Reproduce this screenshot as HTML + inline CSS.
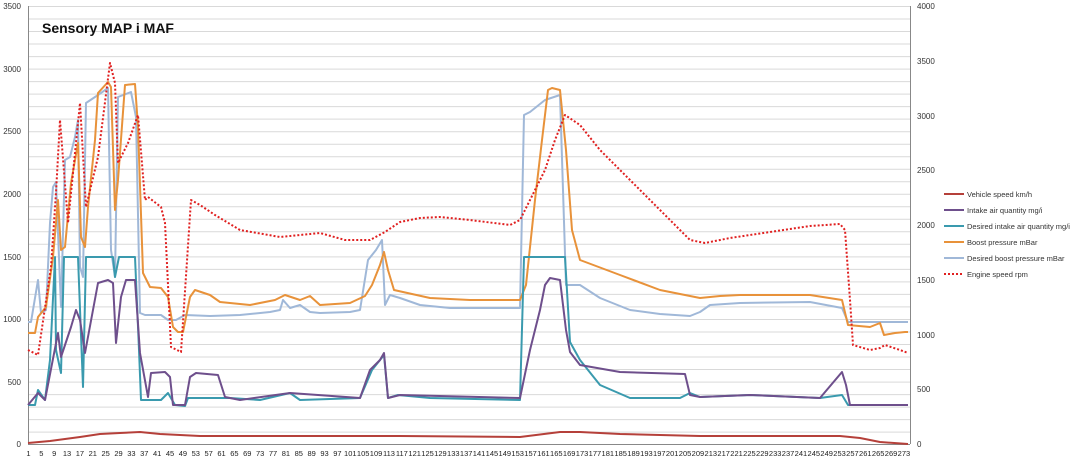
<!DOCTYPE html><html><head><style>body{margin:0;background:#fff;width:1074px;height:464px;overflow:hidden;font-family:"Liberation Sans",sans-serif}
.xl{position:absolute;top:449px;left:22px;display:flex;font-size:7.5px;color:#222}
.xl span{width:12.88px;text-align:center;white-space:nowrap}
</style></head><body>
<svg width="1074" height="464" style="position:absolute;left:0;top:0" font-family="Liberation Sans" >
<g id="grid" stroke="#d9d9d9" stroke-width="1"></g>
<g stroke="#d9d9d9" stroke-width="1">
<path d="M28 6.5H910M28 19H910M28 31.5H910M28 44H910M28 56.6H910M28 69.1H910M28 81.6H910M28 94.1H910M28 106.6H910M28 119.1H910M28 131.7H910M28 144.2H910M28 156.7H910M28 169.2H910M28 181.7H910M28 194.3H910M28 206.8H910M28 219.3H910M28 231.8H910M28 244.3H910M28 256.9H910M28 269.4H910M28 281.9H910M28 294.4H910M28 306.9H910M28 319.5H910M28 332H910M28 344.5H910M28 357H910M28 369.5H910M28 382.1H910M28 394.6H910M28 407.1H910M28 419.6H910M28 432.1H910"/>
</g>
<line x1="28.5" y1="6" x2="28.5" y2="444" stroke="#888"/><line x1="910.5" y1="6" x2="910.5" y2="444" stroke="#888"/><line x1="28" y1="444.5" x2="910" y2="444.5" stroke="#888"/>
<g font-size="8" fill="#333" text-anchor="end">
<text x="21" y="9">3500</text><text x="21" y="72">3000</text><text x="21" y="134">2500</text><text x="21" y="197">2000</text><text x="21" y="260">1500</text><text x="21" y="322">1000</text><text x="21" y="385">500</text><text x="21" y="447">0</text></g>
<g font-size="8" fill="#333">
<text x="917" y="9">4000</text><text x="917" y="64">3500</text><text x="917" y="119">3000</text><text x="917" y="173">2500</text><text x="917" y="228">2000</text><text x="917" y="283">1500</text><text x="917" y="338">1000</text><text x="917" y="392">500</text><text x="917" y="447">0</text></g>
<text x="42" y="33" font-size="14" font-weight="bold" fill="#111">Sensory MAP i MAF</text>
<g fill="none" stroke-width="2" stroke-linejoin="round">
<polyline stroke="#a0b8d8" points="28,322 31,322 38,280 41,313 46,310 50,223 53,187 56,182 60,283 61,307 65,160 70,157 75,137 78,120 80,267 83,277 86,103 98,95 108,88 111,250 115,277 118,97 131,92 136,117 140,313 145,315 161,315 168,320 176,320 185,315 210,316 240,315 270,312 280,310 283,300 290,308 300,305 310,312 320,313 350,312 360,310 368,260 376,250 382,240 385,305 390,295 400,298 420,305 450,308 520,308 524,115 530,112 545,100 560,95 566,285 580,285 600,298 630,310 660,314 690,316 700,312 710,305 740,303 810,302 842,308 848,322 908,322"/>
<polyline stroke="#e8923a" points="28,333 35,333 38,317 46,307 53,257 58,200 61,250 65,247 71,183 78,143 81,237 85,247 88,207 95,140 98,93 108,82 111,87 115,210 118,180 125,85 135,84 138,127 143,273 150,287 161,288 168,297 173,327 178,332 183,332 190,297 195,290 210,295 220,302 250,305 275,300 285,295 300,300 310,296 320,305 350,303 365,296 372,285 380,265 384,252 388,270 394,290 430,298 470,300 520,300 526,285 535,200 542,140 548,90 552,88 560,90 566,150 572,230 580,260 620,275 660,290 700,298 720,296 740,295 810,295 842,300 848,325 870,327 880,323 884,335 895,333 905,332 908,332"/>
<polyline stroke="#3a9aae" points="28,405 35,405 38,390 45,400 50,360 55,257 56,350 61,373 64,257 78,257 83,387 86,257 113,257 115,277 119,257 135,257 139,350 141,400 161,400 168,393 175,405 185,406 188,398 230,398 260,400 290,393 300,400 360,398 372,370 380,360 384,355 388,398 398,395 430,398 520,400 524,257 565,257 570,342 580,360 600,385 630,398 680,398 690,393 700,397 750,395 820,398 842,395 848,405 908,405"/>
<polyline stroke="#6e4f8c" points="28,405 38,393 45,400 58,333 61,357 71,327 76,310 80,320 85,353 98,283 108,280 113,283 116,343 121,297 126,280 135,280 140,353 148,397 151,373 165,372 170,377 173,405 185,405 190,377 196,373 218,375 225,397 240,400 290,393 360,398 370,370 380,360 384,353 388,398 400,395 520,398 530,350 540,310 545,285 550,278 560,280 566,330 570,352 580,365 620,372 685,374 690,395 700,397 750,395 820,398 842,372 846,385 850,405 908,405"/>
<polyline stroke="#b5403a" points="28,443 50,441 80,437 100,434 120,433 140,432 160,434 200,436 400,436 520,437 560,432 580,432 620,434 700,436 810,436 840,436 860,438 880,442 908,444"/>
<polyline stroke="#e02020" stroke-dasharray="2,2" points="28,350 38,355 51,267 56,193 60,120 68,223 80,103 86,207 98,157 110,63 115,83 118,163 128,143 138,115 145,200 148,197 161,207 165,223 171,347 181,352 191,200 200,205 215,215 240,230 280,237 320,233 345,240 370,240 385,232 400,222 420,218 440,217 470,220 510,225 520,220 530,200 545,170 555,140 565,115 580,125 600,150 630,180 660,210 690,240 705,243 730,238 770,232 810,226 840,224 845,230 850,300 853,345 870,350 880,348 885,345 900,350 908,353"/>
</g>
<g stroke-width="2">
<line x1="944" x2="964" y1="194" y2="194" stroke="#b5403a"/>
<line x1="944" x2="964" y1="210" y2="210" stroke="#6e4f8c"/>
<line x1="944" x2="964" y1="226" y2="226" stroke="#3a9aae"/>
<line x1="944" x2="964" y1="242" y2="242" stroke="#e8923a"/>
<line x1="944" x2="964" y1="258" y2="258" stroke="#a0b8d8"/>
<line x1="944" x2="964" y1="274" y2="274" stroke="#e02020" stroke-dasharray="2,2"/>
</g>
<g font-size="7.5" fill="#333">
<text x="967" y="197">Vehicle speed km/h</text>
<text x="967" y="213">Intake air quantity mg/i</text>
<text x="967" y="229">Desired intake air quantity  mg/i</text>
<text x="967" y="245">Boost pressure mBar</text>
<text x="967" y="261">Desired boost pressure mBar</text>
<text x="967" y="277">Engine speed rpm</text>
</g>
</svg>
<div class="xl"><span>1</span><span>5</span><span>9</span><span>13</span><span>17</span><span>21</span><span>25</span><span>29</span><span>33</span><span>37</span><span>41</span><span>45</span><span>49</span><span>53</span><span>57</span><span>61</span><span>65</span><span>69</span><span>73</span><span>77</span><span>81</span><span>85</span><span>89</span><span>93</span><span>97</span><span>101</span><span>105</span><span>109</span><span>113</span><span>117</span><span>121</span><span>125</span><span>129</span><span>133</span><span>137</span><span>141</span><span>145</span><span>149</span><span>153</span><span>157</span><span>161</span><span>165</span><span>169</span><span>173</span><span>177</span><span>181</span><span>185</span><span>189</span><span>193</span><span>197</span><span>201</span><span>205</span><span>209</span><span>213</span><span>217</span><span>221</span><span>225</span><span>229</span><span>233</span><span>237</span><span>241</span><span>245</span><span>249</span><span>253</span><span>257</span><span>261</span><span>265</span><span>269</span><span>273</span></div>
</body></html>
